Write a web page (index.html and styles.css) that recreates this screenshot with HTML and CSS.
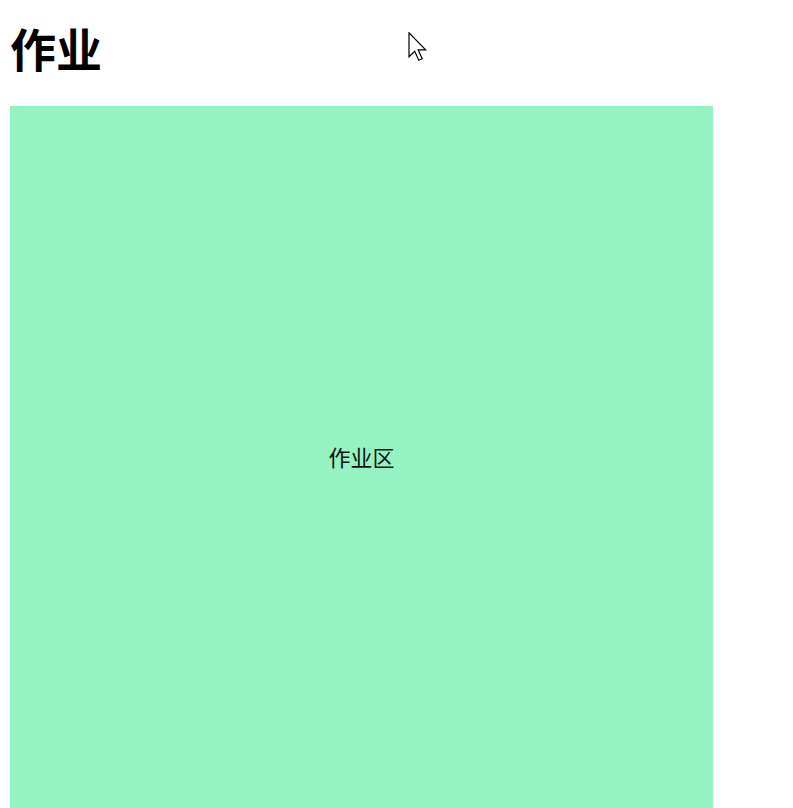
FILE: index.html
```html
<!DOCTYPE html>
<html lang="zh-CN">
<head>
<meta charset="utf-8">
<title>作业</title>
<link rel="stylesheet" href="styles.css">
</head>
<body>
<h1 class="title">作业</h1>
<div class="workspace">
  <span class="workspace-label">作业区</span>
</div>
<svg class="cursor" width="20" height="30" viewBox="0 0 13 20" aria-hidden="true">
  <path d="M0.5 0.5 L0.5 16.5 L4.3 12.8 L7 18.8 L9.3 17.8 L6.6 11.9 L11.6 11.9 Z" fill="#fff" stroke="#000" stroke-width="0.8" stroke-linejoin="miter"/>
</svg>
</body>
</html>
```

FILE: styles.css
```css
html, body {
  margin: 0;
  padding: 0;
  background: #fff;
}
body {
  padding: 20px 10px 0 10px;
  font-family: "Noto Sans CJK SC", "Noto Sans", sans-serif;
  color: #000;
  overflow: hidden;
  height: 808px;
  box-sizing: border-box;
  position: relative;
}
.title {
  margin: 0 0 32px 0;
  font-size: 46px;
  line-height: 54px;
  font-weight: 700;
}
.workspace {
  width: 703px;
  height: 703px;
  background: #95f2c3;
  display: flex;
  align-items: center;
  justify-content: center;
}
.workspace-label {
  font-size: 22px;
  line-height: 30px;
  margin-bottom: 4px;
  color: #111;
}
.cursor {
  position: absolute;
  left: 408px;
  top: 32px;
}
```
